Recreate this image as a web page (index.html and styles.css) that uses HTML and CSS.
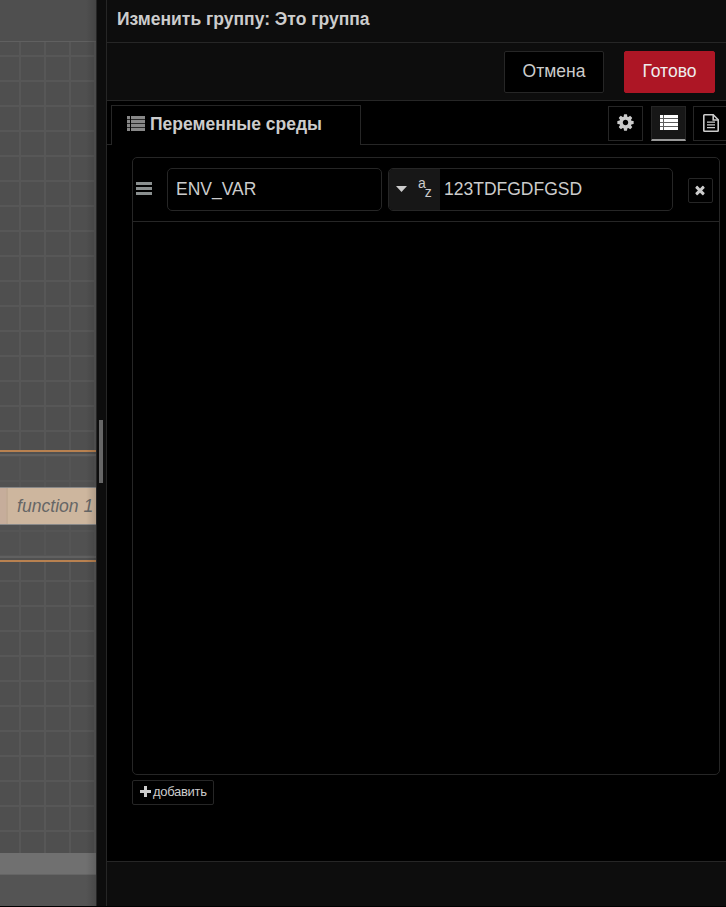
FILE: index.html
```html
<!DOCTYPE html>
<html lang="ru">
<head>
<meta charset="utf-8">
<title>Изменить группу</title>
<link rel="stylesheet" href="styles.css">
</head>
<body>
<div class="app">
  <section class="workspace">
    <div class="workspace-top"></div>
    <div class="canvas">
      <div class="group"></div>
      <div class="node"><span class="node-icon"></span><span class="node-label">function 1</span></div>
    </div>
    <div class="scrollbar"></div>
    <div class="workspace-footer"></div>
  </section>
  <div class="separator"><div class="handle"></div></div>
  <main class="tray">
    <header class="tray-header"><span class="title">Изменить группу: Это группа</span></header>
    <div class="toolbar">
      <button class="btn cancel"><span>Отмена</span></button>
      <button class="btn primary"><span>Готово</span></button>
    </div>
    <nav class="tabs">
      <div class="tab-gap"></div>
      <div class="tab">
        <svg class="icon-list" viewBox="0 0 18 15"><path d="M0 0h3v3H0zM4 0h14v3H4zM0 4h3v3H0zM4 4h14v3H4zM0 8h3v3H0zM4 8h14v3H4zM0 12h3v3H0zM4 12h14v3H4z"/><path opacity=".3" d="M0 0h3v15H0zM4 0h14v15H4z"/></svg>
        <span class="tab-label">Переменные среды</span>
      </div>
      <div class="tab-tools">
        <button class="tool"><svg class="icon-cog" viewBox="0 0 1792 1792"><path d="M1152 896q0-106-75-181t-181-75-181 75-75 181 75 181 181 75 181-75 75-181zm512-109v222q0 12-8 23t-20 13l-185 28q-19 54-39 91 35 50 107 138 10 12 10 25t-9 23q-27 37-99 108t-94 71q-12 0-26-9l-138-108q-44 23-91 38-16 136-29 186-7 28-36 28h-222q-14 0-24.500-8.500t-11.500-21.500l-28-184q-49-16-90-37l-141 107q-10 9-25 9-14 0-25-11-126-114-165-168-7-10-7-23 0-12 8-23 15-21 51-66.500t54-70.500q-27-50-41-99l-183-27q-13-2-21-12.500t-8-23.500v-222q0-12 8-23t19-13l186-28q14-46 39-92-40-57-107-138-10-12-10-24 0-10 9-23 26-36 98.500-107.500t94.500-71.500q13 0 26 10l138 107q44-23 91-38 16-136 29-186 7-28 36-28h222q14 0 24.500 8.500t11.500 21.500l28 184q49 16 90 37l142-107q9-9 24-9 13 0 25 10 129 119 165 170 7 8 7 22 0 12-8 23-15 21-51 66.500t-54 70.500q26 50 41 98l183 28q13 2 21 12.500t8 23.500z"/></svg></button>
        <button class="tool active"><svg class="icon-list" viewBox="0 0 18 15"><path d="M0 0h3v3H0zM4 0h14v3H4zM0 4h3v3H0zM4 4h14v3H4zM0 8h3v3H0zM4 8h14v3H4zM0 12h3v3H0zM4 12h14v3H4z"/><path opacity=".3" d="M0 0h18v15H0z"/></svg></button>
        <button class="tool last"><svg class="icon-doc" viewBox="0 0 16 18"><g fill="none" stroke="currentColor" stroke-width="1.600"><path d="M.8 1.500Q.8.800 1.500.800h8.700l5 5v10.700q0 .7-.7.700h-13q-.7 0-.7-.7z"/><path d="M10.200.800v5.200h5"/></g><path d="M4 7.500h8v1.300H4zM4 10.200h8v1.300H4zM4 12.900h8v1.300H4z"/></svg></button>
      </div>
    </nav>
    <div class="body">
      <div class="env-list">
        <div class="env-row">
          <svg class="icon-bars" viewBox="0 0 16 13"><path d="M0 0h16v3H0zM0 5h16v3H0zM0 10h16v3H0z"/></svg>
          <div class="input name"><span>ENV_VAR</span></div>
          <div class="input typed">
            <div class="type">
              <svg class="caret" viewBox="0 0 11 6"><path d="M0 0h11L5.500 6z"/></svg>
              <span class="az"><span>a</span><span class="z">z</span></span>
            </div>
            <span class="value">123TDFGDFGSD</span>
          </div>
          <button class="remove"><svg viewBox="0 0 1792 1792"><path d="M1490 1322q0 40-28 68l-136 136q-28 28-68 28t-68-28l-294-294-294 294q-28 28-68 28t-68-28l-136-136q-28-28-28-68t28-68l294-294-294-294q-28-28-28-68t28-68l136-136q28-28 68-28t68 28l294 294 294-294q28-28 68-28t68 28l136 136q28 28 28 68t-28 68l-294 294 294 294q28 28 28 68z"/></svg></button>
        </div>
      </div>
      <button class="add"><svg viewBox="0 0 11 11"><path d="M4 0h3v4h4v3H7v4H4V7H0V4h4z"/></svg><span>добавить</span></button>
    </div>
    <footer class="tray-footer"></footer>
  </main>
</div>
</body>
</html>
```
FILE: styles.css
```css
* { box-sizing: border-box; }
body {
  margin: 0;
  background: #000;
  color: #ccc;
  font: 17.5px/20px "Liberation Sans", Arial, sans-serif;
  overflow: hidden;
}
button { font: inherit; color: inherit; padding: 0; margin: 0; }
svg { display: block; fill: currentColor; flex: none; }
span { white-space: nowrap; }
.app { display: flex; width: 726px; height: 907px; border-bottom: 1px solid #000; overflow: hidden; }

.workspace { position: relative; width: 96px; flex: none; display: flex; flex-direction: column; overflow: hidden; }
.workspace::after {
  content: "";
  position: absolute;
  inset: 0 0 0 auto;
  width: 10px;
  background: linear-gradient(90deg, transparent, rgba(0, 0, 0, .14));
}
.workspace-top { height: 41px; background: #4f4f4f; }
.canvas {
  position: relative;
  height: 812px;
  border-top: 1px solid #606060;
  background-color: #4f4f4f;
  background-image:
    linear-gradient(90deg, #575757 2px, transparent 2px),
    linear-gradient(#575757 2px, transparent 2px);
  background-size: 25px 25px;
  background-position: 19px 13px;
}
.group {
  position: absolute;
  left: -10px;
  top: 408px;
  width: 130px;
  height: 112px;
  border: solid #b88150;
  border-width: 2px 0;
  background: rgba(84, 84, 84, .5);
  box-shadow: inset 0 2px 0 #505050, inset 0 4px 0 #606060, inset 0 -2px 0 #505050, inset 0 -4px 0 #606060;
}
.node {
  position: absolute;
  left: 0;
  top: 445px;
  width: 120px;
  height: 38px;
  display: flex;
  align-items: center;
  border: solid #888;
  border-width: 1px 0;
  background: #cdb69e;
}
.node-icon { width: 8px; height: 36px; background: #c6ad9b; border-right: 2px solid #c2ab95; }
.node-label { margin-left: 9px; color: #666; font-style: italic; font-size: 17.6px; }
.scrollbar { height: 22px; background: #707070; border-bottom: 1px solid #656565; }
.workspace-footer { flex: 1; background: #545454; }

.separator {
  width: 11px;
  flex: none;
  display: flex;
  align-items: center;
  justify-content: center;
  background: #0d0d0d;
  border: solid #262626;
  border-width: 0 1px;
  padding-right: 1px;
}
.handle { width: 4px; height: 63px; background: #666; margin-bottom: 3px; }

.tray { width: 619px; flex: none; display: flex; flex-direction: column; overflow: hidden; }
.tray-header { height: 43px; padding: 9px 0 0 10px; background: #0d0d0d; border-bottom: 1px solid #262626; font-weight: bold; }
.toolbar { height: 58px; display: flex; justify-content: flex-end; gap: 20px; padding: 8px 11px 0 0; background: #0d0d0d; border-bottom: 1px solid #262626; }
.btn { height: 42px; border: 1px solid #262626; border-radius: 2px; background: #000; padding-bottom: 2px; }
.cancel { width: 100px; }
.primary { width: 91px; background: #ad1625; border-color: #ad1625; color: #eee; }

.tabs { height: 44px; display: flex; }
.tab-gap { width: 4px; flex: none; border-bottom: 1px solid #262626; }
.tab { width: 250px; flex: none; margin-top: 4px; padding: 0 0 4px 15px; display: flex; align-items: center; gap: 5px; border: 1px solid #262626; border-bottom: 0; }
.tab .icon-list { color: #888; }
.tab-label { font-weight: bold; }
.icon-list { width: 18px; height: 15px; }
.tab-tools { width: 365px; flex: none; display: flex; gap: 8px; padding: 5px 0 0 247px; border-bottom: 1px solid #262626; }
.tool { width: 35px; height: 35px; flex: none; display: flex; align-items: center; justify-content: center; border: 1px solid #262626; background: #000; }
.tool.active { background: #171717; color: #fff; border-bottom: 2px solid #999; }
.tool.active .icon-list { margin-bottom: 1px; }
.tool.last { margin-left: -1px; }
.icon-cog { width: 19px; height: 19px; margin-bottom: 2px; }
.icon-doc { width: 16px; height: 18px; margin-bottom: 1px; }

.body { flex: 1; padding: 12px 6px 0 25px; display: flex; flex-direction: column; align-items: flex-start; }
.env-list { width: 588px; height: 618px; border: 1px solid #262626; border-radius: 5px; }
.env-row { height: 64px; display: flex; align-items: center; padding-left: 3px; border-bottom: 1px solid #262626; }
.icon-bars { width: 16px; height: 13px; margin-bottom: 2px; color: #8a8f8f; }
.input { height: 43px; display: flex; align-items: center; border: 1px solid #262626; border-radius: 5px; overflow: hidden; }
.input.name { width: 215px; margin-left: 15px; padding: 0 0 2px 8px; }
.input.typed { width: 285px; margin-left: 6px; }
.type { width: 51px; height: 41px; flex: none; display: flex; padding-left: 7px; background: #171717; }
.caret { width: 11px; height: 6px; margin-top: 17px; }
.az { display: flex; margin: 5px 0 0 11px; font-size: 14px; line-height: 18px; }
.az .z { margin: 9px 0 0 -1px; }
.value { margin: 0 0 2px 4px; }
.remove { width: 25px; height: 25px; margin: 1px 0 0 15px; display: flex; align-items: center; justify-content: center; background: #000; border: 1px solid #262626; border-radius: 2px; }
.remove svg { width: 14px; height: 14px; margin-right: 1px; }
.add { width: 82px; height: 25px; margin-top: 5px; padding: 0 0 2px 7px; display: flex; align-items: center; gap: 2px; background: #000; border: 1px solid #262626; border-radius: 2px; font-size: 13px; letter-spacing: -.3px; }
.add svg { width: 11px; height: 11px; }
.tray-footer { height: 45px; background: #0d0d0d; border-top: 1px solid #262626; }
```
